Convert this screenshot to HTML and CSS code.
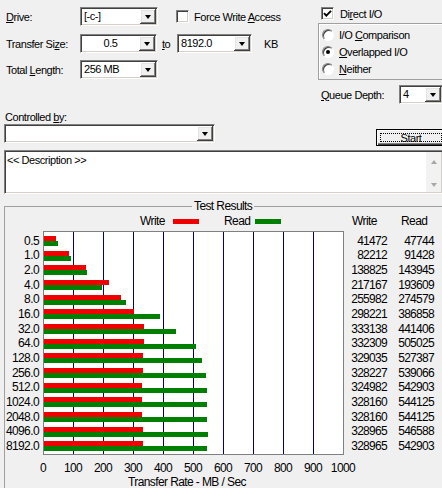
FILE: index.html
```html
<!DOCTYPE html>
<html>
<head>
<meta charset="utf-8">
<title>ATTO Disk Benchmark</title>
<link rel="stylesheet" href="styles.css">
</head>
<body>
<div class="app">
  <div class="top">
    <div class="left">
      <div class="row r1">
        <span class="lbl"><u>D</u>rive:</span>
        <div class="combo w78"><span class="val">[-c-]</span><span class="drop"></span></div>
        <div class="check force"><span class="box"></span><span>Force Write <u>A</u>ccess</span></div>
      </div>
      <div class="row r2">
        <span class="lbl">Transfer Si<u>z</u>e:</span>
        <div class="combo w77"><span class="val center">0.5</span><span class="drop"></span></div>
        <span class="to"><u>t</u>o</span>
        <div class="combo w75"><span class="val">8192.0</span><span class="drop"></span></div>
        <span class="kb">KB</span>
      </div>
      <div class="row r3">
        <span class="lbl">Total <u>L</u>ength:</span>
        <div class="combo w78"><span class="val">256 MB</span><span class="drop"></span></div>
      </div>
    </div>
    <div class="right">
      <div class="check direct"><span class="box"><svg width="11" height="11" viewBox="0 0 11 11"><path d="M2 5.2 L4.3 7.6 L9 2.8" fill="none" stroke="#000" stroke-width="1.9"/></svg></span><span>Di<u>r</u>ect I/O</span></div>
      <div class="group">
        <div class="radio"><span class="rb"></span><span>I/O <u>C</u>omparison</span></div>
        <div class="radio"><span class="rb on"></span><span><u>O</u>verlapped I/O</span></div>
        <div class="radio"><span class="rb"></span><span><u>N</u>either</span></div>
      </div>
      <div class="queue">
        <span class="qlbl"><u>Q</u>ueue Depth:</span>
        <div class="combo w44"><span class="val">4</span><span class="drop"></span></div>
      </div>
    </div>
  </div>

  <div class="ctl-label">Controlled <u>b</u>y:</div>
  <div class="ctl-row">
    <div class="combo w211"><span class="val"></span><span class="drop"></span></div>
    <button class="start"><span class="focus">Start</span></button>
  </div>

  <div class="desc">
    <div class="desc-text">&lt;&lt; Description &gt;&gt;</div>
    <div class="scroll"><span class="up"></span><span class="down"></span></div>
  </div>

  <fieldset class="results">
    <legend>Test Results</legend>
    <div class="chart">
      <div class="legend-row">
        <span class="lg-w">Write</span><i class="sw red"></i>
        <span class="lg-r">Read</span><i class="sw green"></i>
        <span class="hd-w">Write</span><span class="hd-r">Read</span>
      </div>
      <div class="chart-body">
        <div class="labels">
          <div class="r">0.5</div><div class="r">1.0</div><div class="r">2.0</div><div class="r">4.0</div><div class="r">8.0</div><div class="r">16.0</div><div class="r">32.0</div><div class="r">64.0</div><div class="r">128.0</div><div class="r">256.0</div><div class="r">512.0</div><div class="r">1024.0</div><div class="r">2048.0</div><div class="r">4096.0</div><div class="r">8192.0</div>
        </div>
        <div class="plot">
          <div class="br"><i class="w" style="width:12.4px"></i><i class="rd" style="width:14.3px"></i></div>
          <div class="br"><i class="w" style="width:24.7px"></i><i class="rd" style="width:27.4px"></i></div>
          <div class="br"><i class="w" style="width:41.6px"></i><i class="rd" style="width:43.2px"></i></div>
          <div class="br"><i class="w" style="width:65.2px"></i><i class="rd" style="width:58.1px"></i></div>
          <div class="br"><i class="w" style="width:76.8px"></i><i class="rd" style="width:82.4px"></i></div>
          <div class="br"><i class="w" style="width:89.5px"></i><i class="rd" style="width:116.1px"></i></div>
          <div class="br"><i class="w" style="width:99.9px"></i><i class="rd" style="width:132.4px"></i></div>
          <div class="br"><i class="w" style="width:99.7px"></i><i class="rd" style="width:151.5px"></i></div>
          <div class="br"><i class="w" style="width:98.7px"></i><i class="rd" style="width:158.2px"></i></div>
          <div class="br"><i class="w" style="width:98.5px"></i><i class="rd" style="width:161.7px"></i></div>
          <div class="br"><i class="w" style="width:97.5px"></i><i class="rd" style="width:162.9px"></i></div>
          <div class="br"><i class="w" style="width:98.4px"></i><i class="rd" style="width:163.2px"></i></div>
          <div class="br"><i class="w" style="width:98.4px"></i><i class="rd" style="width:163.2px"></i></div>
          <div class="br"><i class="w" style="width:98.7px"></i><i class="rd" style="width:164.0px"></i></div>
          <div class="br"><i class="w" style="width:98.7px"></i><i class="rd" style="width:162.9px"></i></div>
        </div>
        <div class="nums nw">
          <div class="r">41472</div><div class="r">82212</div><div class="r">138825</div><div class="r">217167</div><div class="r">255982</div><div class="r">298221</div><div class="r">333138</div><div class="r">332309</div><div class="r">329035</div><div class="r">328227</div><div class="r">324982</div><div class="r">328160</div><div class="r">328160</div><div class="r">328965</div><div class="r">328965</div>
        </div>
        <div class="nums nr">
          <div class="r">47744</div><div class="r">91428</div><div class="r">143945</div><div class="r">193609</div><div class="r">274579</div><div class="r">386858</div><div class="r">441406</div><div class="r">505025</div><div class="r">527387</div><div class="r">539066</div><div class="r">542903</div><div class="r">544125</div><div class="r">544125</div><div class="r">546588</div><div class="r">542903</div>
        </div>
      </div>
      <div class="axis">
        <span>0</span><span>100</span><span>200</span><span>300</span><span>400</span><span>500</span><span>600</span><span>700</span><span>800</span><span>900</span><span>1000</span>
      </div>
      <div class="xtitle">Transfer Rate - MB / Sec</div>
    </div>
  </fieldset>
</div>
</body>
</html>
```

FILE: styles.css
```css
* { box-sizing: border-box; }
html, body { margin: 0; padding: 0; }
body {
  background: #f0f0f0;
  font-family: "Liberation Sans", Arial, sans-serif;
  font-size: 11px;
  letter-spacing: -0.45px;
  color: #000;
}
u { text-decoration: underline; text-underline-offset: 1px; }
.app { width: 442px; height: 488px; overflow: hidden; }

.top { display: flex; height: 104px; }
.left { width: 317px; flex: none; padding-top: 7px; }
.row { display: flex; align-items: center; height: 19px; }
.r2 { margin-top: 8px; }
.r3 { margin-top: 7px; }
.lbl { width: 80px; padding-left: 6px; flex: none; white-space: nowrap; }

.combo {
  display: flex;
  height: 19px;
  flex: none;
  background: #fff;
  border: 1px solid;
  border-color: #808080 #fff #fff #808080;
  box-shadow: inset 1px 1px #404040, inset -1px -1px #d4d0c8;
  padding: 1px;
}
.w78 { width: 78px; }
.w77 { width: 77px; }
.w75 { width: 75px; }
.w44 { width: 44px; }
.w211 { width: 211px; margin-left: 4px; }
.val { flex: 1; padding-left: 2px; line-height: 15px; white-space: nowrap; overflow: hidden; }
.val.center { text-align: center; padding-left: 0; }
.drop {
  width: 16px;
  flex: none;
  background: #f0f0f0;
  box-shadow: inset -1px -1px #404040, inset 1px 1px #fff, inset -2px -2px #808080, inset 2px 2px #e4e4e4;
  display: flex;
  align-items: center;
  justify-content: center;
}
.drop::after {
  content: "";
  width: 0; height: 0;
  border-left: 3.5px solid transparent;
  border-right: 3.5px solid transparent;
  border-top: 4px solid #000;
  margin-top: 1px;
}
.to { margin-left: 5px; width: 15px; flex: none; }
.kb { margin-left: 12px; }

.check { display: flex; align-items: center; white-space: nowrap; height: 13px; }
.box {
  width: 13px; height: 13px; flex: none;
  background: #fff;
  border: 1px solid;
  border-color: #808080 #fff #fff #808080;
  box-shadow: inset 1px 1px #404040, inset -1px -1px #d4d0c8;
  display: flex; align-items: center; justify-content: center;
}
.force { margin-left: 18px; }
.force .box { margin-right: 5px; }

.right { width: 125px; flex: none; padding-top: 7px; }
.direct { margin-left: 4px; }
.direct .box { margin-right: 6px; }
.direct svg { display: block; }
.group {
  margin-top: 3px;
  margin-left: 1px;
  width: 140px;
  height: 57px;
  border: 1px solid #a0a0a0;
  box-shadow: inset 1px 1px #fff;
  padding: 2.5px 0 0 3px;
}
.radio { display: flex; align-items: center; height: 17px; white-space: nowrap; }
.rb {
  width: 12px; height: 12px; flex: none;
  border-radius: 50%;
  background: #fff;
  border: 1px solid;
  border-color: #808080 #fff #fff #808080;
  box-shadow: inset 1px 1px #404040;
  margin-right: 5px;
  display: flex; align-items: center; justify-content: center;
}
.rb.on::after { content: ""; width: 4px; height: 4px; border-radius: 50%; background: #000; }
.queue { display: flex; align-items: center; height: 19px; margin-top: 5px; }
.qlbl { width: 82px; padding-left: 4px; flex: none; white-space: nowrap; }

.ctl-label { margin-top: 6px; padding-left: 5px; height: 14px; line-height: 14px; }
.ctl-row { display: flex; align-items: flex-start; height: 19px; }
.start {
  margin-left: 161px;
  margin-top: 5px;
  width: 70px;
  height: 17px;
  flex: none;
  padding: 3px;
  border: 1px solid #000;
  background: #f0f0f0;
  box-shadow: inset 1px 1px #fff, inset -1px -1px #404040, inset -2px -2px #808080;
  font: inherit;
  letter-spacing: inherit;
  color: #000;
  display: flex;
}
.focus { flex: 1; border: 1px dotted #000; line-height: 9px; text-align: center; }

.desc {
  margin: 7px 0 0 4px;
  width: 439px;
  height: 44px;
  background: #fff;
  border: 1px solid;
  border-color: #808080 #fff #fff #808080;
  box-shadow: inset 1px 1px #404040, inset -1px -1px #d4d0c8;
  padding: 1px;
  display: flex;
}
.desc-text { flex: 1; padding: 1px 0 0 1px; line-height: 14px; }
.scroll {
  width: 15px; flex: none;
  background: #f2f2f2;
  display: flex; flex-direction: column; justify-content: space-between; align-items: center;
  padding: 8px 0 5px;
}
.up, .down { width: 0; height: 0; border-left: 3.5px solid transparent; border-right: 3.5px solid transparent; }
.up { border-bottom: 4px solid #a8a8a8; }
.down { border-top: 4px solid #a8a8a8; }

.results {
  margin: 5px 0 0 4px;
  padding: 0;
  min-width: 0;
  width: 470px;
  height: 300px;
  border: 1px solid #a0a0a0;
}
.results legend {
  margin-left: 187px;
  padding: 0 2px;
  font-size: 12px;
  letter-spacing: -0.6px;
  line-height: 14px;
}
.chart { font-size: 12px; letter-spacing: -0.6px; }
.legend-row { display: flex; align-items: center; height: 16px; padding-left: 135px; }
.lg-w { width: 33px; flex: none; }
.lg-r { margin-left: 25px; width: 31px; flex: none; }
.sw { width: 26px; height: 5px; flex: none; margin-top: 1px; }
.red { background: #f00000; }
.green { background: #008000; }
.hd-w { margin-left: 71px; width: 49px; flex: none; }
.hd-r { flex: none; }

.chart-body { display: flex; align-items: flex-start; margin-top: 2px; }
.r { height: 14.667px; line-height: 14.667px; white-space: nowrap; }
.labels { width: 34px; flex: none; text-align: right; padding-top: 2.67px; }
.plot {
  margin-left: 4px;
  width: 301px;
  height: 224px;
  flex: none;
  border: 1px solid #808080;
  padding-top: 1.67px;
  background-color: #fff;
  background-image: linear-gradient(90deg, transparent 29px, #000080 29px, #000080 30px, transparent 30px);
  background-size: 30px 100%;
}
.br { height: 14.667px; display: flex; flex-direction: column; justify-content: center; }
.br i { display: block; height: 5px; flex: none; }
.w { background: #f00000; }
.rd { background: #008000; }
.nums { flex: none; text-align: right; padding-top: 2.67px; letter-spacing: -0.7px; }
.nw { width: 43px; }
.nr { width: 47px; }

.axis { display: flex; margin-left: 23px; margin-top: 6px; height: 14px; line-height: 14px; }
.axis span { width: 30px; flex: none; text-align: center; }
.xtitle { margin-left: 123px; height: 14px; line-height: 14px; white-space: nowrap; }
```
